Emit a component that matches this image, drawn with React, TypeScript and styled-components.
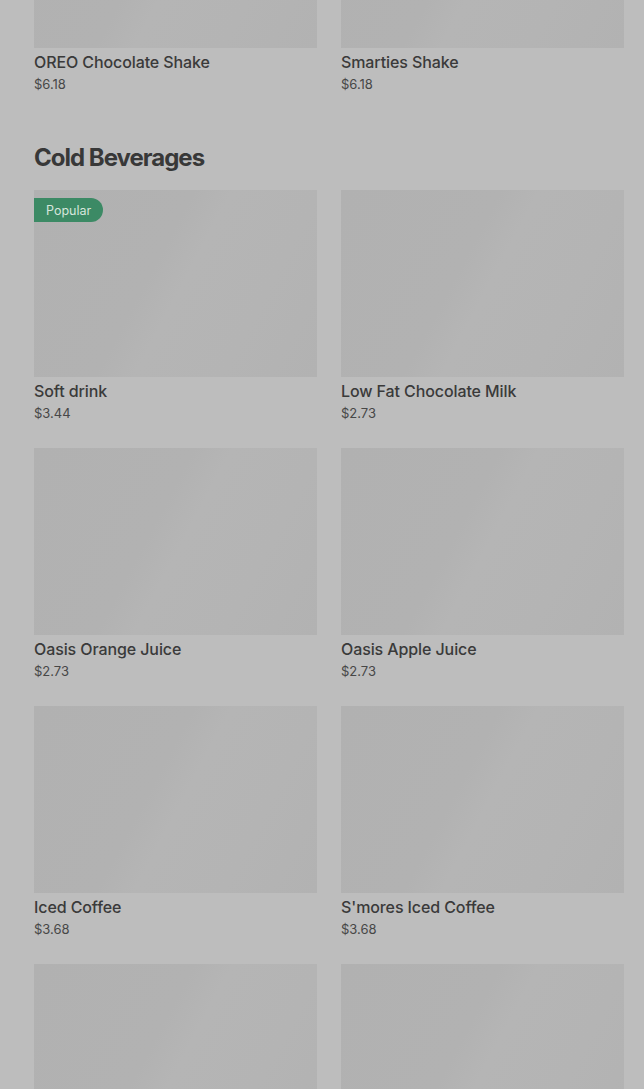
import React from "react";
import { createGlobalStyle, styled } from "styled-components";

type Item = { id: string; name?: string; price?: string; popular?: boolean };

const shakes: Item[] = [
  { id: "oreo", name: "OREO Chocolate Shake", price: "$6.18" },
  { id: "smarties", name: "Smarties Shake", price: "$6.18" },
];

// last two are still below the fold, only their pictures peek in
const coldBeverages: Item[] = [
  { id: "soft", name: "Soft drink", price: "$3.44", popular: true },
  { id: "milk", name: "Low Fat Chocolate Milk", price: "$2.73" },
  { id: "orange", name: "Oasis Orange Juice", price: "$2.73" },
  { id: "apple", name: "Oasis Apple Juice", price: "$2.73" },
  { id: "iced", name: "Iced Coffee", price: "$3.68" },
  { id: "smores", name: "S'mores Iced Coffee", price: "$3.68" },
  { id: "next1" },
  { id: "next2" },
];

function MenuCard({ item }: { item: Item }) {
  return (
    <Card>
      <Thumb>{item.popular && <Badge>Popular</Badge>}</Thumb>
      {item.name && <Name>{item.name}</Name>}
      {item.price && <Price>{item.price}</Price>}
    </Card>
  );
}

export default function App() {
  return (
    <>
      <GlobalStyle />
      <Page>
        <Section>
          <Grid>
            {shakes.map((it) => (
              <MenuCard key={it.id} item={it} />
            ))}
          </Grid>
        </Section>
        <Section>
          <Heading>Cold Beverages</Heading>
          <Grid>
            {coldBeverages.map((it) => (
              <MenuCard key={it.id} item={it} />
            ))}
          </Grid>
        </Section>
      </Page>
    </>
  );
}

const GlobalStyle = createGlobalStyle`
  html, body {
    margin: 0;
    padding: 0;
    background: #bdbdbd;
    overflow: hidden;
  }
  body {
    font-family: Inter, "Liberation Sans", sans-serif;
    color: #3a3a3a;
  }
`;

const Page = styled.div`
  display: flex;
  flex-direction: column;
  gap: 48px;
  margin-top: -139px; /* scrolled into the list */
  padding: 0 20px 0 34px;
  width: 590px;
`;

const Section = styled.section`
  display: flex;
  flex-direction: column;
  gap: 16px;
`;

const Heading = styled.h2`
  margin: 0;
  font-size: 24px;
  line-height: 32px;
  font-weight: 700;
  letter-spacing: -1px;
  color: #383838;
`;

const Grid = styled.div`
  display: grid;
  grid-template-columns: 283px 283px;
  column-gap: 24px;
  row-gap: 25px;
`;

const Card = styled.div`
  display: flex;
  flex-direction: column;
`;

const Thumb = styled.div`
  position: relative;
  height: 187px;
  background: linear-gradient(
    118deg,
    #b1b1b1 0%,
    #b2b2b2 42%,
    #b5b5b5 52%,
    #b4b4b4 75%,
    #b2b2b2 100%
  );
`;

const Badge = styled.span`
  position: absolute;
  top: 8px;
  left: 0;
  height: 24px;
  padding: 0 12px;
  display: flex;
  align-items: center;
  background: #3c8a65;
  color: #d6e6dc;
  font-size: 12.5px;
  border-radius: 0 12px 12px 0;
`;

const Name = styled.div`
  margin-top: 2px;
  font-size: 16px;
  line-height: 24px;
  font-weight: 500;
  letter-spacing: -0.1px;
  color: #3a3a3a;
`;

const Price = styled.div`
  font-size: 13px;
  line-height: 20px;
  color: #474747;
`;
